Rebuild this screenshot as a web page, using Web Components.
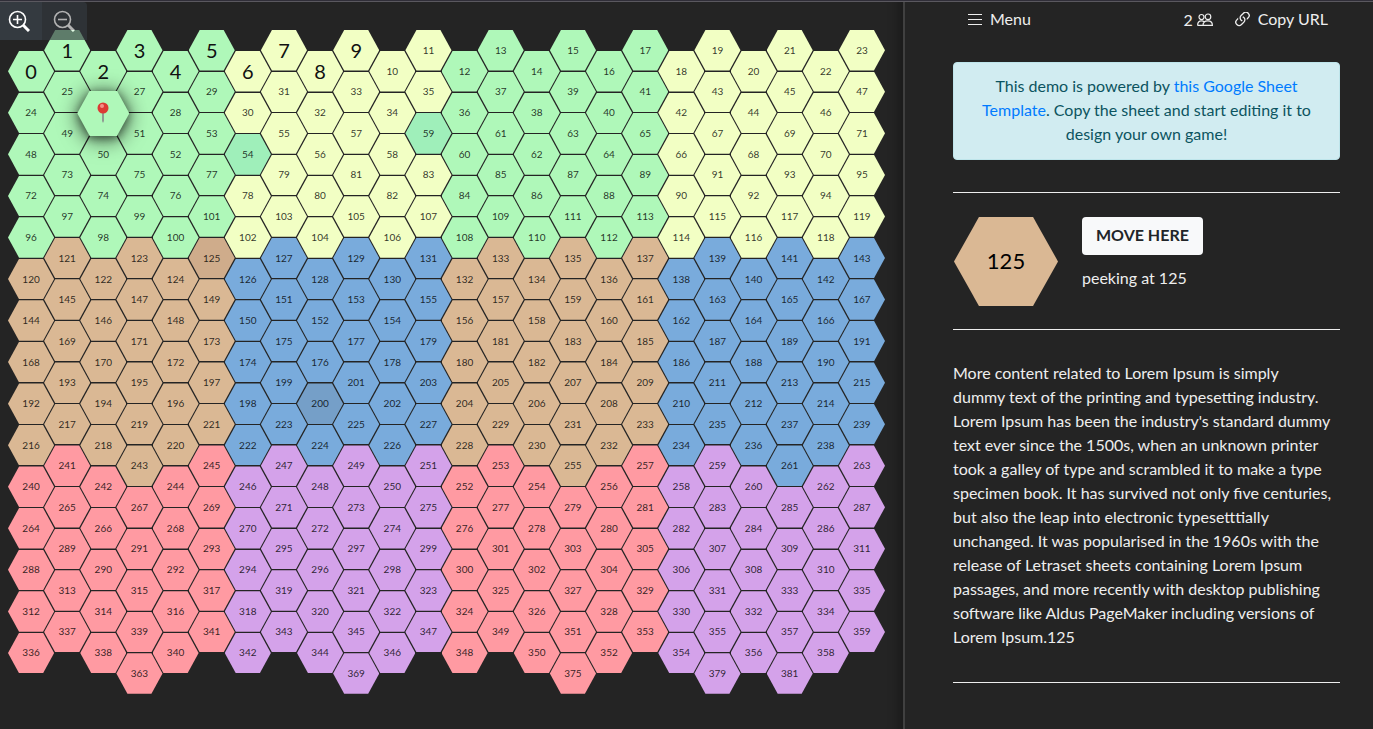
<!DOCTYPE html>
<html lang="en">
<head>
<meta charset="utf-8">
<title>Hex board game</title>
<style>
html, body { height: 100%; margin: 0; }
body { background: #242424; color: #eee; font: 16px/24px Lato, "Liberation Sans", sans-serif; }
</style>
</head>
<body>
<game-app></game-app>

<script>
const define = (name, html, setup) => {
  const template = document.createElement('template');
  template.innerHTML = html;
  customElements.define(name, class extends HTMLElement {
    constructor() {
      super();
      this.attachShadow({ mode: 'open' }).append(template.content.cloneNode(true));
    }
    connectedCallback() { if (setup) setup(this, this.shadowRoot); }
  });
};

define('hex-tile', `
<style>
:host { display: block; min-width: 0; min-height: 0; }
.face { display: grid; place-items: center; box-sizing: border-box; width: 100%; height: 100%; padding-bottom: 1px;
  background: var(--tile, #dab894); color: var(--ink, rgba(0,0,0,.8));
  clip-path: polygon(24% 0, 76% 0, 100% 50%, 76% 100%, 24% 100%, 0 50%); }
</style>
<div class="face"><slot></slot></div>`);

define('map-pin', `
<style>:host { display: block; width: 12px; height: 22px; } svg { display: block; }</style>
<svg width="12" height="22" viewBox="0 0 12 22" aria-label="Your position">
  <path d="M5 10h2v9l-1 2-1-2z" fill="#8f9b93"/>
  <circle cx="6" cy="6" r="5.5" fill="#dc3a34"/>
  <circle cx="5" cy="4" r="2" fill="#f5908a"/>
</svg>`);

define('hex-board', `
<style>
:host { display: grid; grid-template-columns: repeat(24, minmax(0, 1fr)); aspect-ratio: 866 / 685; font-size: 10px; line-height: 12px; }
.column { display: grid; grid-template-rows: repeat(16, minmax(0, 1fr)); margin: 21px -10px 0 0; }
.column:nth-of-type(even) { margin: 0 -10px 21px 0; }
hex-tile { margin-bottom: 1px; }
hex-tile.big { font-size: 20px; line-height: 24px; --ink: #111; }
.token { position: relative; z-index: 1; margin: -2px -3px; filter: drop-shadow(0 2px 4px rgba(0,0,0,.4)) drop-shadow(0 2px 10px rgba(0,0,0,.7)); }
</style>`, (host, root) => {
  const bands = [['#aff8b9', '#f2ffc4'], ['#dab894', '#79abdc'], ['#ff9aa2', '#d4a2ea']];
  const special = { 54: '#9fefba', 59: '#9fefba', 125: '#cfac8b', 200: '#759fc8', 243: '#dab894', 255: '#dab894', 261: '#79abdc' };
  const last = new Set([363, 369, 375, 379, 381]);
  for (let c = 0; c < 24; c++) {
    const column = document.createElement('div');
    column.className = 'column';
    for (let r = 0; r < 16; r++) {
      const n = r * 24 + c;
      if (r === 15 && !last.has(n)) continue;
      const tile = document.createElement('hex-tile');
      const band = bands[Math.min(2, Math.floor(r / 5))];
      tile.style.setProperty('--tile', special[n] || band[Math.floor(c / 6) % 2]);
      if (n < 10) tile.className = 'big';
      if (n === 26) {
        tile.className = 'token';
        tile.append(document.createElement('map-pin'));
      } else tile.textContent = n;
      column.append(tile);
    }
    root.append(column);
  }
});

define('zoom-controls', `
<style>
:host { display: flex; }
button { display: grid; place-items: center; width: 42px; height: 38px; padding: 0 4px 0 0; border: 0; background: #343a40; color: #fff; }
button:disabled { width: 45px; padding: 0 2px 0 0; border-radius: 0 4px 0 0; opacity: .65; }
svg { display: block; fill: none; stroke: currentColor; }
</style>
<button aria-label="Zoom in"><svg width="22" height="22" viewBox="0 0 22 22" stroke-width="1.600"><circle cx="9.500" cy="9.500" r="8"/><path d="M9.500 5v9M5 9.500h9"/><path d="m15 15 6 6" stroke-width="3"/></svg></button>
<button aria-label="Zoom out" disabled><svg width="22" height="22" viewBox="0 0 22 22" stroke-width="1.600"><circle cx="9.500" cy="9.500" r="8"/><path d="M5 9.500h9"/><path d="m15 15 6 6" stroke-width="3"/></svg></button>`);

define('map-panel', `
<style>
:host { display: block; position: relative; flex: 1; min-width: 0; overflow: hidden; box-shadow: inset -16px 0 12px -12px rgba(0,0,0,.3); }
zoom-controls { position: absolute; left: 0; top: 0; z-index: 2; }
hex-board { margin: 28px 28px 0 8px; }
</style>
<zoom-controls></zoom-controls>
<hex-board></hex-board>`);

define('side-header', `
<style>
:host { display: flex; align-items: center; justify-content: space-between; padding: 0 12px 0 15px; height: 34px; }
button { display: flex; align-items: center; gap: 8px; padding: 0; border: 0; background: none; color: inherit; font: inherit; }
.group { display: flex; gap: 22px; }
.players { display: flex; align-items: center; gap: 4px; padding-top: 2px; }
svg { display: block; }
.list { margin-top: 2px; }
</style>
<button><svg class="list" width="14" height="14" viewBox="0 0 14 14" stroke="currentColor" fill="none"><path d="M0 1.500h14M0 6.500h14M0 11.500h14"/></svg>Menu</button>
<div class="group">
  <span class="players">2 <svg width="16" height="16" viewBox="0 0 16 16" fill="none" stroke="currentColor" stroke-width="1.200" aria-label="players"><circle cx="4.500" cy="5" r="2.500"/><circle cx="11" cy="4.800" r="2.800"/><path d="M.6 13.400c0-3 1.500-4.500 4-4.500 1.200 0 2 .4 2.700 1.200M6 13.400c0-3 2-4.500 4.800-4.500s4.600 1.500 4.600 4.500zM.6 13.400H6"/></svg></span>
  <button><svg width="15" height="15" viewBox="2.300 2.300 11.400 11.400" fill="currentColor"><path d="M4.715 6.542 3.343 7.914a3 3 0 1 0 4.243 4.243l1.828-1.829A3 3 0 0 0 8.586 5.500L8 6.086a1 1 0 0 0-.154.199 2 2 0 0 1 .861 3.337L6.880 11.450a2 2 0 1 1-2.830-2.830l.793-.792a4 4 0 0 1-.128-1.287z"/><path d="M6.586 4.672A3 3 0 0 0 7.414 9.500l.775-.776a2 2 0 0 1-.896-3.346L9.120 3.550a2 2 0 1 1 2.830 2.830l-.793.792c.112.420.155.855.128 1.287l1.372-1.372a3 3 0 1 0-4.243-4.243z"/></svg>Copy URL</button>
</div>`);

define('info-alert', `
<style>
:host { display: block; padding: 11px 20px 13px; border: 1px solid #bee5eb; border-radius: 4px; background: #d1ecf1; color: #0c5460; text-align: center; }
</style><slot></slot>`);

define('peek-card', `
<style>
:host { display: flex; gap: 24px; padding: 24px 0 23px; border: solid #eee; border-width: 1px 0; }
hex-tile { width: 104px; height: 89px; margin-left: 1px; font-size: 22px; --ink: #000; }
button { display: block; height: 38px; margin: 0 0 11px; padding: 0 14px 2px; border: 0; border-radius: 4px; background: #f8f9fa; color: #212529; font: bold 16px/24px Lato, sans-serif; }
p { margin: 0; }
</style>
<hex-tile>125</hex-tile>
<div><button>MOVE HERE</button><p>peeking at 125</p></div>`);

define('side-panel', `
<style>
:host { display: block; box-sizing: border-box; flex: 0 0 470px; padding: 0 33px 0 48px; border-left: 2px solid #404040; }
info-alert { margin: 26px 0 32px; }
a { color: #007bff; text-decoration: none; }
p { margin: 31px 0 33px; }
hr { margin: 0; border: 0; border-top: 1px solid #eee; }
</style>
<side-header></side-header>
<info-alert>This demo is powered by <a href="#sheet">this Google Sheet Template</a>. Copy the sheet and start editing it to design your own game!</info-alert>
<peek-card></peek-card>
<p>More content related to Lorem Ipsum is simply<br>dummy text of the printing and typesetting industry. Lorem Ipsum has been the industry's standard dummy text ever since the 1500s, when an unknown printer<br>took a galley of type and scrambled it to make a type specimen book. It has survived not only five centuries, but also the leap into electronic typesetttially unchanged. It was popularised in the 1960s with the release of Letraset sheets containing Lorem Ipsum passages, and more recently with desktop publishing software like Aldus PageMaker including versions of Lorem Ipsum.125</p>
<hr>`);

define('game-app', `
<style>
:host { display: flex; box-sizing: border-box; min-height: 100%; padding-top: 1px; border-top: 1px solid #302e38; box-shadow: inset 0 1px #5a585f; }
</style>
<map-panel></map-panel>
<side-panel></side-panel>`);
</script>
</body>
</html>
